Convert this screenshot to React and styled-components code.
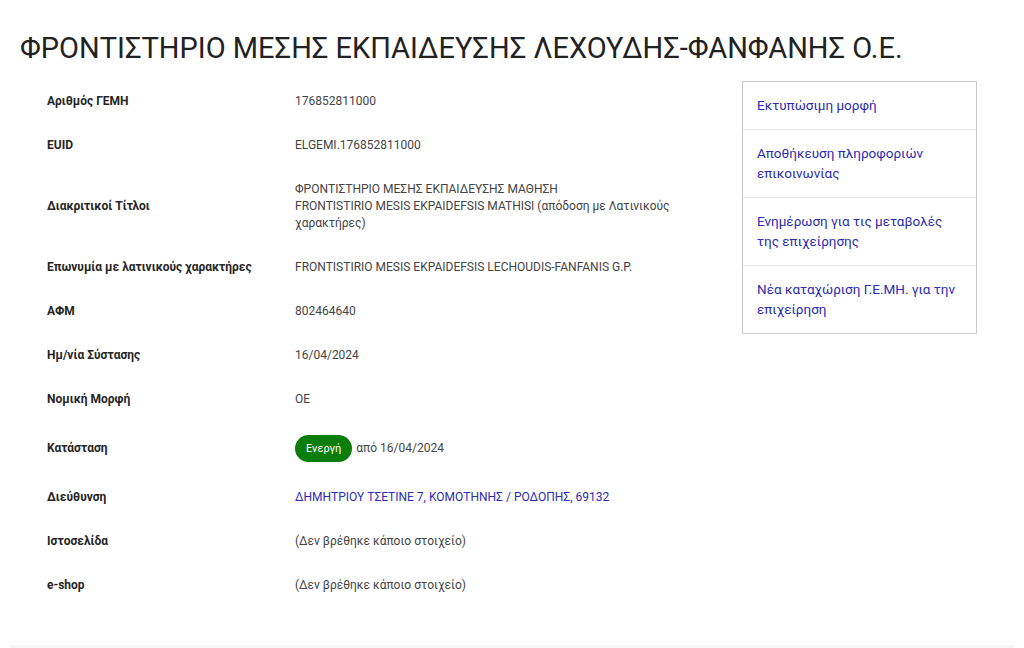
import React from "react";
import styled, { createGlobalStyle } from "styled-components";

const GlobalStyle = createGlobalStyle`
  body {
    margin: 0;
    background: #fff;
    font-family: Roboto, "Noto Sans", sans-serif;
    color: #333;
  }
`;

const Page = styled.div`
  padding: 28px 20px 0;
`;
const Title = styled.h1`
  margin: 0 0 12px;
  font-size: 29px;
  font-weight: 400;
  line-height: 40px;
  color: #222;
`;
const Columns = styled.div`
  display: flex;
  align-items: flex-start;
`;
const Table = styled.div`
  width: 680px;
  padding-left: 27px;
`;
const Row = styled.div`
  display: grid;
  grid-template-columns: 248px 1fr;
  align-items: center;
  padding: 13px 0 14px;
  min-height: 17px;
`;
const Label = styled.div`
  font-size: 12px;
  font-weight: 700;
  line-height: 17px;
  color: #262626;
`;
const Value = styled.div`
  font-size: 12px;
  line-height: 17px;
  color: #444;
  padding-right: 20px;
`;
const Link = styled.a`
  color: #2c2cb4;
  text-decoration: none;
`;
const Badge = styled.span`
  display: inline-block;
  background: #0b7d0b;
  color: #fff;
  font-size: 11px;
  line-height: 27px;
  padding: 0 11px;
  border-radius: 14px;
  margin-right: 4px;
`;
const Side = styled.div`
  margin-left: 15px;
  margin-top: 1px;
  width: 233px;
  border: 1px solid #c8c8c8;
`;
const SideItem = styled.a`
  display: block;
  padding: 13px 14px 14px;
  font-size: 13.5px;
  line-height: 20px;
  color: #2c2cb4;
  text-decoration: none;
  & + & {
    border-top: 1px solid #e6e6e6;
  }
`;
const Footer = styled.div`
  margin: 37px 10px 0;
  height: 20px;
  background: #f7f7f7;
`;

const rows = [
  ["Αριθμός ΓΕΜΗ", "176852811000"],
  ["EUID", "ELGEMI.176852811000"],
  [
    "Διακριτικοί Τίτλοι",
    <>
      ΦΡΟΝΤΙΣΤΗΡΙΟ ΜΕΣΗΣ ΕΚΠΑΙΔΕΥΣΗΣ ΜΑΘΗΣΗ
      <br />
      FRONTISTIRIO MESIS EKPAIDEFSIS MATHISI (απόδοση με Λατινικούς χαρακτήρες)
    </>,
  ],
  ["Επωνυμία με λατινικούς χαρακτήρες", "FRONTISTIRIO MESIS EKPAIDEFSIS LECHOUDIS-FANFANIS G.P."],
  ["ΑΦΜ", "802464640"],
  ["Ημ/νία Σύστασης", "16/04/2024"],
  ["Νομική Μορφή", "OE"],
  [
    "Κατάσταση",
    <>
      <Badge>Ενεργή</Badge>από 16/04/2024
    </>,
  ],
  ["Διεύθυνση", <Link href="#">ΔΗΜΗΤΡΙΟΥ ΤΣΕΤΙΝΕ 7, ΚΟΜΟΤΗΝΗΣ / ΡΟΔΟΠΗΣ, 69132</Link>],
  ["Ιστοσελίδα", "(Δεν βρέθηκε κάποιο στοιχείο)"],
  ["e-shop", "(Δεν βρέθηκε κάποιο στοιχείο)"],
];

const links = [
  "Εκτυπώσιμη μορφή",
  "Αποθήκευση πληροφοριών επικοινωνίας",
  "Ενημέρωση για τις μεταβολές της επιχείρησης",
  "Νέα καταχώριση Γ.Ε.ΜΗ. για την επιχείρηση",
];

export default function App() {
  return (
    <>
      <GlobalStyle />
      <Page>
        <Title>ΦΡΟΝΤΙΣΤΗΡΙΟ ΜΕΣΗΣ ΕΚΠΑΙΔΕΥΣΗΣ ΛΕΧΟΥΔΗΣ-ΦΑΝΦΑΝΗΣ Ο.Ε.</Title>
        <Columns>
          <Table>
            {rows.map(([label, value]) => (
              <Row key={label}>
                <Label>{label}</Label>
                <Value>{value}</Value>
              </Row>
            ))}
          </Table>
          <Side>
            {links.map((l) => (
              <SideItem key={l} href="#">
                {l}
              </SideItem>
            ))}
          </Side>
        </Columns>
      </Page>
      <Footer />
    </>
  );
}
